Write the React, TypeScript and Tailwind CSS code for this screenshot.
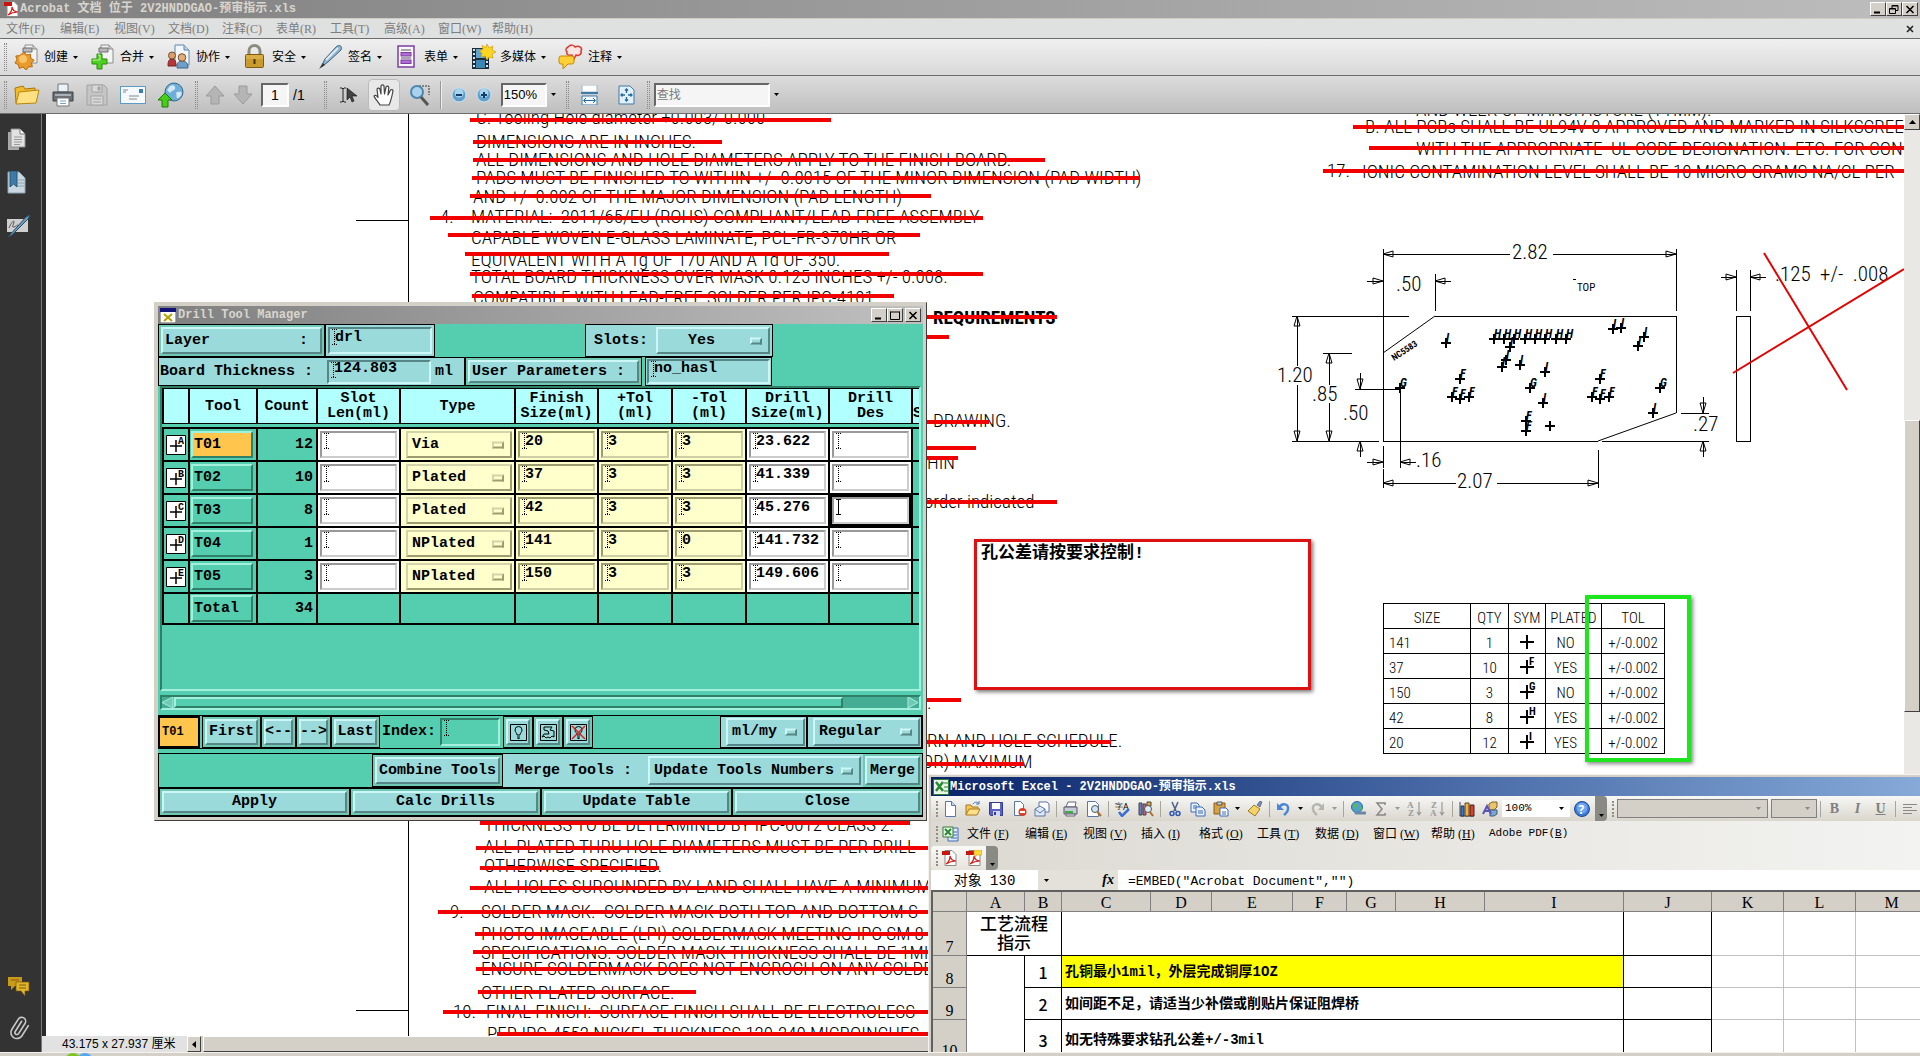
import React from 'react';
import { Paperclip } from 'lucide-react';

type Kids = { children?: React.ReactNode };

const MONO = "font-['Liberation_Mono','Noto_Sans_CJK_SC',monospace]";
const SERIF = "font-['Liberation_Serif','Noto_Sans_CJK_SC',serif]";
const SANS = "font-['Liberation_Sans','Noto_Sans_CJK_SC',sans-serif]";
const CAD = "font-['Roboto_Condensed','Open_Sans_Condensed','Liberation_Sans_Narrow','Liberation_Sans',sans-serif]";

/* ---------- small shared pieces ---------- */

function Ic({ w = 24, h = 24, box, children }: Kids & { w?: number; h?: number; box?: string }) {
  return (
    <svg width={w} height={h} viewBox={box ?? `0 0 ${w} ${h}`} className="shrink-0" aria-hidden="true">
      {children}
    </svg>
  );
}

function Caret({ className = 'fill-black' }: { className?: string }) {
  return (
    <svg width="5" height="3" viewBox="0 0 5 3" className={`shrink-0 ${className}`} aria-hidden="true">
      <path d="M0 0h5L2.5 3z" />
    </svg>
  );
}

function WinButton({ kind }: { kind: 'min' | 'max' | 'restore' | 'close' }) {
  return (
    <button
      aria-label={kind}
      className="flex h-[14px] w-4 items-center justify-center border border-b-[#404040] border-l-white border-r-[#404040] border-t-white bg-[#d4d0c8]"
    >
      <svg width="10" height="9" viewBox="0 0 10 9" fill="none" stroke="#000" aria-hidden="true">
        {kind === 'min' && <path d="M1 7.5h6" strokeWidth="2" />}
        {kind === 'max' && <path d="M.5 1h9M.5 .5v8h9v-8" />}
        {kind === 'restore' && <path d="M3 3V.5h6v5H7M3 1h6M.5 3.5h6v5h-6zM.5 4h6" />}
        {kind === 'close' && <path d="M1.500 1l7 7m0-7l-7 7" strokeWidth="1.600" />}
      </svg>
    </button>
  );
}

/* ---------- Acrobat icons ---------- */

const Sheet = ({ x = 8, y = 1 }: { x?: number; y?: number }) => (
  <g transform={`translate(${x} ${y})`}>
    <path d="M2 0h8l4 4v14H2z" fill="#f4f4f4" stroke="#8c8c8c" />
    <path d="M10 0v4h4" fill="#d0d0d0" stroke="#8c8c8c" />
    <path d="M0 3h9v4H0z" fill="#b9b9b9" stroke="#6f6f6f" />
  </g>
);

const CreateIcon = () => (
  <Ic w={26} h={26}>
    <Sheet x={9} />
    <path d="M10 8l2.500 3 4-.8.2 4 3.500 2-2.800 2.800 1 3.700-4 .2-2.200 3.200L9 23l-3.700 1.500-.9-3.800L1 19l2-3.400L1.800 12l3.900-.4z" fill="#e99a2b" stroke="#b8690d" />
    <circle cx="9" cy="15" r="4" fill="#f8c468" />
  </Ic>
);
const MergeIcon = () => (
  <Ic w={26} h={26}>
    <Sheet x={9} />
    <path d="M7 10h5v5h5v5h-5v5H7v-5H2v-5h5z" fill="#4fd01f" stroke="#2b8a0c" />
    <path d="M8 11h2v5H3v1" fill="none" stroke="#b5f59a" />
  </Ic>
);
const CollabIcon = () => (
  <Ic w={26} h={26}>
    <path d="M9 1h9l5 5v15H9z" fill="#f3f7fb" stroke="#5a88ad" />
    <path d="M18 1v5h5" fill="#b9d4e8" stroke="#5a88ad" />
    <path d="M2 22c0-5 1-7 4-7s4 2 4 7z" fill="#b8353a" stroke="#7d1e22" />
    <circle cx="6" cy="11.500" r="3.500" fill="#d9a06c" stroke="#7b4c25" />
    <path d="M11 24c0-5 1-7 5-7s6 2 6 7z" fill="#6f9fc7" stroke="#38658c" />
    <circle cx="16" cy="13.500" r="3.800" fill="#e0ad7e" stroke="#7b4c25" />
  </Ic>
);
const LockIcon = () => (
  <Ic w={26} h={26}>
    <path d="M7 11V7a5.500 5.500 0 0111 0v4" fill="none" stroke="#8b8b80" strokeWidth="3" />
    <rect x="3.500" y="10.500" width="18" height="13" rx="1" fill="#c99a2e" stroke="#7e5b0d" />
    <path d="M4 12h17M4 14h17" stroke="#e6c161" />
    <path d="M12.500 15v5" stroke="#4b3400" strokeWidth="2" />
  </Ic>
);
const PenIcon = () => (
  <Ic w={26} h={26}>
    <path d="M3 23l4-8L18 3c3-3 7-1 5 3L10 18z" fill="#8eb4cf" stroke="#43637c" />
    <path d="M8 16L20 4" stroke="#dcebf5" strokeWidth="2" />
    <path d="M1 25l4-6 2 2z" fill="#333" />
  </Ic>
);
const FormIcon = () => (
  <Ic w={26} h={26}>
    <rect x="4" y="2" width="16" height="21" fill="#fbf7ff" stroke="#7b3fa0" strokeWidth="1.500" />
    <path d="M7 6h10M7 14h10" stroke="#555" />
    <rect x="7" y="8.500" width="10" height="3.500" fill="#b26bd6" stroke="#7b3fa0" />
    <rect x="7" y="16" width="10" height="3.500" fill="#b26bd6" stroke="#7b3fa0" />
  </Ic>
);
const MediaIcon = () => (
  <Ic w={26} h={26}>
    <rect x="2" y="4" width="17" height="21" fill="#1d2d38" />
    <rect x="6" y="5" width="9" height="9" fill="#5fa6cf" />
    <rect x="6" y="16" width="9" height="8" fill="#3b86b4" />
    <path d="M4 5v20M17 5v20" stroke="#dfe7ec" strokeWidth="2" strokeDasharray="2 2" />
    <path d="M17 0l2 4 4-2-1 4 4 2-4 2 1 4-4-1-2 3-2-4-4 1 1-4-3-2 4-1.500-1-4 4 2z" fill="#ffd61f" stroke="#d79b00" strokeWidth=".7" />
  </Ic>
);
const NoteIcon = () => (
  <Ic w={26} h={26}>
    <path d="M10 3c3-3 6-2 7 0 4-2 8 1 6 4 1 4-3 5-5 4l-2 4-2-4c-4 1-6-1-5-3-2-1-1-4 1-5z" fill="#fbe5e3" stroke="#d93a2f" strokeWidth="1.500" />
    <path d="M3 12h11q2 0 2 2v4q0 2-2 2h-4l-5 5v-5H3q-2 0-2-2v-4q0-2 2-2z" fill="#ffcf36" stroke="#c78a06" />
  </Ic>
);

const FolderIcon = () => (
  <Ic w={26} h={22}>
    <path d="M2 19L1 4l8-2 2 3 10-1v3" fill="#f0b92e" stroke="#a8770d" />
    <path d="M2 20L5 8l20-2-3 13z" fill="#ffe184" stroke="#b8860b" />
  </Ic>
);
const PrinterIcon = () => (
  <Ic w={22} h={24}>
    <path d="M6 1h10v8H6z" fill="#eaf3fa" stroke="#777" />
    <path d="M1 9h20v9H1z" fill="#6b7075" stroke="#3c3f42" />
    <path d="M3 12h16" stroke="#a9b0b5" strokeWidth="2" />
    <path d="M5 15h12v8H5z" fill="#fff" stroke="#777" />
    <path d="M8 18h6M8 20.500h6" stroke="#7aa2c0" />
  </Ic>
);
const DiskIcon = () => (
  <Ic w={22} h={22}>
    <path d="M1 1h17l3 3v17H1z" fill="#c5c5c5" stroke="#a3a3a3" />
    <path d="M6 1h10v7H6zM5 12h12v9H5z" fill="#d8d8d8" stroke="#a3a3a3" />
    <path d="M12 3h2v3h-2zM7 15h8M7 18h8" stroke="#a3a3a3" fill="#aaa" />
  </Ic>
);
const MailIcon = () => (
  <Ic w={26} h={20}>
    <rect x=".5" y="1.500" width="25" height="17" fill="#f4f9fd" stroke="#5d9ac4" />
    <rect x="19" y="4" width="4" height="4" fill="#3a7fb4" />
    <path d="M3 5h5M3 7h3M9 11h10M9 14h8" stroke="#888" />
  </Ic>
);
const GlobeIcon = () => (
  <Ic w={26} h={26}>
    <circle cx="16" cy="10" r="9" fill="#6faed8" stroke="#33688f" />
    <path d="M12 4c4-2 6 1 5 3s-3 1-4 3-3-1-4-2zM18 11c3-2 5-1 6 0-1 4-4 6-5 5s0-3-1-5z" fill="#d4e9f7" />
    <path d="M7 11l7 7h-4v7H4v-7H0z" fill="#45cf1a" stroke="#22790a" />
  </Ic>
);
const ArrowIcon = ({ down = false }: { down?: boolean }) => (
  <Ic w={20} h={20}>
    <path d={down ? 'M6 1h8v8h5l-9 10L1 9h5z' : 'M10 1l9 10h-5v8H6v-8H1z'} fill="#b5b5b5" stroke="#9b9b9b" />
  </Ic>
);
const SelectIcon = () => (
  <Ic w={20} h={18}>
    <path d="M1 2h2l1 1 1-1h2M4 3v12M1 16h2l1-1 1 1h2" fill="none" stroke="#222" />
    <path d="M8 2v12l3-3 2 5 2-1-2-5h5z" fill="#444" stroke="#111" strokeWidth=".6" />
  </Ic>
);
const HandIcon = () => (
  <Ic w={24} h={24}>
    <path
      d="M8 22c-2-4-5-6-6-9 1-1.500 3-.5 4 1.500L5 6c1-1.500 2.500-1 3 .5l1 4.500V3c1-1.500 2.600-1.500 3 0l.500 8L14 4c1-1.300 2.600-1 2.800.5L16 12l2.500-5c1-1 2.500-.4 2.500 1-1 5-2 10-4 14z"
      fill="#fff"
      stroke="#444"
      strokeWidth="1.200"
      strokeLinejoin="round"
    />
  </Ic>
);
const MagnifyIcon = () => (
  <Ic w={22} h={22}>
    <path d="M10 2h10v9" fill="none" stroke="#333" strokeDasharray="2 1" />
    <circle cx="8" cy="8" r="6" fill="#a9d2ee" stroke="#4f86ad" strokeWidth="2" />
    <path d="M12 13l7 8" stroke="#555" strokeWidth="3" />
  </Ic>
);
const RoundIcon = ({ plus = false }: { plus?: boolean }) => (
  <Ic w={16} h={16}>
    <circle cx="8" cy="8" r="7" fill="#5f9fcb" stroke="#cfe3f1" />
    <circle cx="8" cy="6" r="4.500" fill="#a8d2ee" />
    <path d={plus ? 'M5 8h6M8 5v6' : 'M5 8h6'} stroke="#0f3f63" strokeWidth="2" />
  </Ic>
);
const FitWidthIcon = () => (
  <Ic w={17} h={20}>
    <path d="M1 0h15v7H1z" fill="#fff" stroke="#9cb9cf" />
    <path d="M0 8h17" stroke="#3e7ba7" strokeWidth="2" />
    <path d="M1 11h15v9H1z" fill="#f2f8fc" stroke="#3e7ba7" />
    <path d="M3 15.500h11M5 13l-2.500 2.500L5 18M12 13l2.500 2.500L12 18" fill="none" stroke="#236a9e" />
  </Ic>
);
const FitPageIcon = () => (
  <Ic w={17} h={20}>
    <path d="M1 1h11l4 4v14H1z" fill="#e3f0f8" stroke="#3e7ba7" />
    <path d="M8.500 4v4M8.500 12v4M3 10h4M10 10h4M7 5.500L8.500 4 10 5.500M7 14.500L8.500 16l1.500-1.500M4.500 8.500L3 10l1.500 1.500M12.500 8.500L14 10l-1.500 1.500" fill="none" stroke="#236a9e" strokeWidth="1.300" />
  </Ic>
);
const PdfIcon = ({ note = false, s = 16 }: { note?: boolean; s?: number }) => (
  <Ic w={s} h={s} box="0 0 16 16">
    <path d="M3 .5h7l4 4v11H3z" fill="#fff" stroke="#8a8a8a" />
    <path d="M0 1h8v4H0z" fill="#c8150d" />
    <path d="M4 14c3-2 4-5 4-8 1 4 3 5 6 5-4 0-7 1-10 3z" fill="none" stroke="#d8201a" strokeWidth="1.200" />
    {note && <path d="M8 0h8v5h-5l-2 2V5H8z" fill="#ffd93b" stroke="#c79a10" strokeWidth=".6" />}
  </Ic>
);

const Grip = () => <span className="h-7 w-[3px] shrink-0 border-x border-dotted border-[#8a8a8a]" />;

/* ---------- Acrobat chrome ---------- */

const acroMenus = ['文件(F)', '编辑(E)', '视图(V)', '文档(D)', '注释(C)', '表单(R)', '工具(T)', '高级(A)', '窗口(W)', '帮助(H)'];

const acroTasks = [
  { label: '创建', icon: <CreateIcon /> },
  { label: '合并', icon: <MergeIcon /> },
  { label: '协作', icon: <CollabIcon /> },
  { label: '安全', icon: <LockIcon /> },
  { label: '签名', icon: <PenIcon /> },
  { label: '表单', icon: <FormIcon /> },
  { label: '多媒体', icon: <MediaIcon /> },
  { label: '注释', icon: <NoteIcon /> },
];

const BOX_IN = 'border-2 border-b-white border-l-[#666] border-r-white border-t-[#666] bg-[#f5f5f5]';

function AcrobatHeader() {
  return (
    <header className="shrink-0">
      <div className="flex h-[18px] items-center bg-linear-to-r from-[#808080] to-[#bdbdbd] pl-1 pr-[2px]">
        <PdfIcon />
        <h1 className={`flex-1 whitespace-pre text-xs font-bold leading-[18px] text-[#d8d5ce] ${MONO}`}>
          Acrobat 文档 位于 2V2HNDDGAO-预审指示.xls
        </h1>
        <div className="flex">
          <WinButton kind="min" />
          <WinButton kind="restore" />
          <WinButton kind="close" />
        </div>
      </div>
      <nav className={`flex h-5 items-center border-t border-[#cfccc4] bg-[#dfe0e0] pl-[6px] text-xs text-[#7d7d7d] ${SERIF}`}>
        {acroMenus.map((m) => (
          <button key={m} className="w-[54px] text-left">
            {m}
          </button>
        ))}
        <button aria-label="close document" className="ml-auto mr-[6px] text-[#222]">
          <svg width="8" height="8" viewBox="0 0 8 8" stroke="currentColor" strokeWidth="1.600" aria-hidden="true">
            <path d="M1 1l6 6m0-6L1 7" />
          </svg>
        </button>
      </nav>
      <div className={`flex h-[37px] items-center border-t border-[#6c6c6c] bg-linear-to-b from-[#f0f0f0] to-[#d9d9d9] pl-1 text-xs text-black ${SANS}`}>
        <Grip />
        <div className="flex gap-3 pl-[7px]">
          {acroTasks.map((t) => (
            <button key={t.label} className="flex items-center gap-1">
              {t.icon}
              <span className="whitespace-nowrap pr-px">{t.label}</span>
              <Caret />
            </button>
          ))}
        </div>
      </div>
      <div className={`flex h-[39px] items-center border-y border-[#6c6c6c] bg-linear-to-b from-[#dcdcdc] to-[#bfbfbf] pl-1 text-sm text-black ${SANS}`}>
        <Grip />
        <div className="flex items-center gap-3 px-[7px]">
          <button aria-label="open"><FolderIcon /></button>
          <button aria-label="print"><PrinterIcon /></button>
          <button aria-label="save"><DiskIcon /></button>
          <button aria-label="mail"><MailIcon /></button>
          <button aria-label="web"><GlobeIcon /></button>
        </div>
        <span className="w-1" />
        <Grip />
        <div className="flex items-center gap-2 px-[7px]">
          <button aria-label="previous page"><ArrowIcon /></button>
          <button aria-label="next page"><ArrowIcon down /></button>
          <span className="flex items-center gap-1">
            <input aria-label="page number" defaultValue="1" className={`h-6 w-7 text-center ${BOX_IN}`} />
            /1
          </span>
        </div>
        <span className="w-3" />
        <Grip />
        <div className="flex items-center gap-[9px] pl-3">
          <button aria-label="select"><SelectIcon /></button>
          <button aria-label="hand" className="flex h-8 w-8 items-center justify-center rounded border border-[#bbb] bg-[#e8e8e8]">
            <HandIcon />
          </button>
          <button aria-label="marquee zoom"><MagnifyIcon /></button>
          <span className="h-7 w-[2px] border-l border-[#999] bg-[#eee]" />
          <button aria-label="zoom out"><RoundIcon /></button>
          <button aria-label="zoom in"><RoundIcon plus /></button>
          <span className="flex items-center gap-1">
            <input aria-label="zoom level" defaultValue="150%" className={`h-6 w-[46px] pl-px text-[13px] ${BOX_IN}`} />
            <Caret />
          </span>
        </div>
        <div className="flex items-center pl-[10px]">
          <Grip />
          <button aria-label="fit width" className="ml-3"><FitWidthIcon /></button>
          <button aria-label="fit page" className="ml-5 mr-3"><FitPageIcon /></button>
          <Grip />
          <input
            aria-label="find"
            placeholder="查找"
            className={`ml-1 mr-1 h-6 w-[116px] pl-px text-xs placeholder:text-[#7a7a7a] ${BOX_IN}`}
          />
          <Caret />
        </div>
      </div>
    </header>
  );
}

function SideRail() {
  return (
    <aside className="flex w-[42px] shrink-0 flex-col items-center border-r border-[#7a7a7a] bg-[#333] pb-3 pr-1 pt-[14px]">
      <div className="flex flex-col gap-5">
        <button aria-label="pages">
          <Ic w={20} h={23}>
            <path d="M1 4h11v18H1z" fill="#a9a9a9" />
            <path d="M4 1h9l5 5v13H4z" fill="#e2e2e2" stroke="#8f8f8f" />
            <path d="M13 1v5h5" fill="#fff" stroke="#777" />
            <path d="M7 9h8M7 11.500h8M7 14h8M7 16.500h6" stroke="#999" />
          </Ic>
        </button>
        <button aria-label="bookmarks">
          <Ic w={20} h={23}>
            <path d="M1 1h11l6 6v15H1z" fill="#c9d7e0" stroke="#8da3b1" />
            <path d="M11 9h6M11 12h6M11 15h6" stroke="#8da3b1" />
            <path d="M3 0h7v16l-3.500-3L3 16z" fill="#3e7ca6" stroke="#245674" />
          </Ic>
        </button>
        <button aria-label="signatures">
          <Ic w={24} h={24}>
            <path d="M0 5h21v13H0z" fill="#cfcfcf" />
            <path d="M2 14c3-7 5-8 5-6s-3 6 0 5 3-3 5-1" fill="none" stroke="#555" />
            <path d="M1 23L19 3l4-2-2 4L5 21z" fill="#6e9ab8" stroke="#2d5069" />
          </Ic>
        </button>
      </div>
      <div className="mt-auto flex flex-col gap-5">
        <button aria-label="comments">
          <Ic w={24} h={20}>
            <path d="M1 1h14v9H8l-4 4v-4H1z" fill="#c99a17" />
            <path d="M9 6h13v9h-4v5l-4-5H9z" fill="#e0b52c" stroke="#6e540c" strokeWidth=".7" />
            <path d="M12 9h7M12 12h7M4 4h8" stroke="#7d6010" />
          </Ic>
        </button>
        <button aria-label="attachments">
          <Paperclip size={24} strokeWidth={1.600} className="-rotate-12 text-[#c9c9c9]" />
        </button>
      </div>
    </aside>
  );
}

/* ---------- CAD sheet ---------- */

// Sheet items are stored in screen units; the pane itself starts here.
const ORIGIN_X = 46;
const ORIGIN_Y = 114;

type Note = { x: number; y: number; t: string; bold?: boolean };

const notes: Note[] = [
  { x: 476, y: 118, t: 'C. Tooling Hole diameter +0.003/-0.000' },
  { x: 476, y: 142, t: 'DIMENSIONS ARE IN INCHES.' },
  { x: 476, y: 160, t: 'ALL DIMENSIONS AND HOLE DIAMETERS APPLY TO THE FINISH BOARD.' },
  { x: 476, y: 178, t: 'PADS MUST BE FINISHED TO WITHIN +/- 0.0015 OF THE MINOR DIMENSION (PAD WIDTH)' },
  { x: 473, y: 197, t: 'AND +/- 0.002 OF THE MAJOR DIMENSION (PAD LENGTH)' },
  { x: 440, y: 217, t: '4.' },
  { x: 471, y: 217, t: 'MATERIAL:  2011/65/EU (ROHS) COMPLIANT/LEAD-FREE ASSEMBLY' },
  { x: 471, y: 238, t: 'CAPABLE WOVEN E-GLASS LAMINATE, PCL-FR-370HR OR' },
  { x: 471, y: 260, t: 'EQUIVALENT WITH A Tg OF 170 AND A Td OF 350.' },
  { x: 471, y: 277, t: 'TOTAL BOARD THICKNESS OVER MASK 0.125 INCHES +/- 0.008.' },
  { x: 473, y: 298, t: 'COMPATIBLE WITH LEAD-FREE SOLDER PER IPC-4101.' },
  { x: 933, y: 318, t: 'REQUIREMENTS', bold: true },
  { x: 933, y: 421, t: 'DRAWING.' },
  { x: 927, y: 463, t: 'HIN' },
  { x: 924, y: 502, t: 'order indicated' },
  { x: 927, y: 703, t: '.' },
  { x: 927, y: 741, t: 'RN AND HOLE SCHEDULE.' },
  { x: 922, y: 762, t: 'OR) MAXIMUM' },
  { x: 484, y: 825, t: 'THICKNESS TO BE DETERMINED BY IPC-6012 CLASS 2.' },
  { x: 484, y: 847, t: 'ALL PLATED THRU HOLE DIAMETERS MUST BE PER DRILL' },
  { x: 484, y: 866, t: 'OTHERWISE SPECIFIED.' },
  { x: 484, y: 887, t: 'ALL HOLES SUROUNDED BY LAND SHALL HAVE A MINIMUM' },
  { x: 450, y: 912, t: '9.' },
  { x: 481, y: 912, t: 'SOLDER MASK.  SOLDER MASK BOTH TOP AND BOTTOM S' },
  { x: 481, y: 934, t: 'PHOTO IMAGEABLE (LPI) SOLDERMASK MEETING IPC SM 8' },
  { x: 481, y: 953, t: 'SPECIFICATIONS. SOLDER MASK THICKNESS SHALL BE 1MIL' },
  { x: 481, y: 969, t: 'ENSURE SOLDERMASK DOES NOT ENCROCH ON ANY SOLDE' },
  { x: 481, y: 993, t: 'OTHER PLATED SURFACE.' },
  { x: 453, y: 1012, t: '10.' },
  { x: 486, y: 1012, t: 'FINAL FINISH:  SURFACE FINISH SHALL BE ELECTROLESS' },
  { x: 487, y: 1034, t: 'PER IPC-4552 NICKEL THICKNESS 120-240 MICROINCHES' },
  { x: 1416, y: 110, t: 'AND WEEK OF MANUFACTURE (YYMM).' },
  { x: 1365, y: 127, t: 'B. ALL PCBs SHALL BE UL94V-0 APPROVED AND MARKED IN SILKSCREEN' },
  { x: 1416, y: 149, t: 'WITH THE APPROPRIATE  UL CODE DESIGNATION. ETC. FOR CONFIG' },
  { x: 1327, y: 171, t: '17.' },
  { x: 1362, y: 172, t: 'IONIC CONTAMINATION LEVEL SHALL BE 10 MICRO GRAMS NA/CL PER' },
];

// [x1, x2, y]
const strikes: [number, number, number][] = [
  [470, 831, 120],
  [473, 722, 142],
  [473, 1045, 160],
  [472, 1140, 178],
  [470, 931, 196],
  [430, 983, 218],
  [448, 920, 235],
  [465, 889, 254],
  [470, 983, 274],
  [472, 894, 296],
  [900, 1057, 317],
  [900, 949, 337],
  [900, 989, 422],
  [900, 976, 448],
  [900, 958, 458],
  [900, 1057, 502],
  [900, 961, 700],
  [900, 1111, 742],
  [900, 1024, 764],
  [480, 910, 823],
  [476, 930, 848],
  [480, 659, 868],
  [470, 930, 888],
  [438, 930, 912],
  [475, 930, 934],
  [473, 930, 952],
  [476, 930, 969],
  [478, 696, 992],
  [443, 930, 1012],
  [497, 930, 1034],
  [1353, 1904, 127],
  [1369, 1904, 148],
  [1323, 1904, 171],
];

const dims = [
  [1512, 259, '2.82'],
  [1396, 291, '.50'],
  [1277, 382, '1.20'],
  [1312, 401, '.85'],
  [1343, 420, '.50'],
  [1416, 467, '.16'],
  [1457, 488, '2.07'],
  [1693, 431, '.27'],
  [1775, 281, '.125  +/-  .008'],
] as const;

const holes: [number, number, string][] = [
  [1446, 343, 'I'],
  [1494, 339, 'H'], [1504, 339, 'H'], [1514, 339, 'H'], [1525, 339, 'H'],
  [1535, 339, 'H'], [1545, 339, 'H'], [1556, 339, 'H'], [1566, 339, 'H'],
  [1613, 329, 'I'], [1621, 328, 'I'], [1644, 337, 'I'], [1638, 346, 'I'],
  [1510, 347, 'I'], [1506, 360, 'I'], [1502, 367, 'I'], [1520, 365, 'I'],
  [1545, 372, 'I'], [1543, 403, 'I'], [1653, 413, 'I'],
  [1460, 379, 'F'], [1452, 397, 'F'], [1460, 399, 'F'], [1469, 397, 'F'],
  [1600, 379, 'F'], [1592, 397, 'F'], [1600, 399, 'F'], [1609, 397, 'F'],
  [1526, 421, 'F'], [1526, 431, 'F'],
  [1400, 388, 'G'], [1530, 388, 'G'], [1660, 388, 'G'],
  [1550, 426, ''],
];

// [tip x, tip y, angle]: 0 points right
const arrows = [
  [1383, 254, 180], [1676, 254, 0], [1383, 281, 0], [1435, 281, 180],
  [1297, 316, 270], [1297, 441, 90], [1329, 353, 270], [1329, 441, 90],
  [1360, 389, 90], [1360, 441, 270], [1383, 462, 0], [1400, 462, 180],
  [1383, 483, 180], [1598, 483, 0], [1703, 413, 90], [1703, 441, 270],
  [1736, 277, 0], [1750, 277, 180],
];

function BoardDrawing() {
  return (
    <svg
      width="644"
      height="270"
      viewBox="1260 230 644 270"
      className={`absolute left-[1214px] top-[116px] ${CAD}`}
      fill="none"
      stroke="#000"
      role="img"
      aria-label="board outline"
    >
      <g shapeRendering="crispEdges">
        <path d="M1383 249V441H1598M1435 316H1676V413M1676 249V311M1435 274V311" />
        <path d="M1383 254H1510M1553 254H1676M1367 281H1383M1435 281H1451" />
        <path d="M1292 316H1409M1292 441H1379M1297 316V366M1297 385V441" />
        <path d="M1323 353H1352M1329 353V385M1329 403V441M1355 389H1400V468M1360 373V389M1360 441V457" />
        <path d="M1383 446V468M1383 469V488M1367 462H1383M1400 462H1416M1383 483H1456M1497 483H1598V450M1598 483V488" />
        <path d="M1681 413H1709M1602 441H1709M1703 397V413M1703 441V457" />
        <path d="M1736 316H1750V441H1736zM1736 270V311M1750 270V311M1721 277H1736M1750 277H1766M1573 279H1576" />
      </g>
      <path d="M1383 353L1435 316M1598 441L1676 413" />
      {arrows.map(([x, y, a], i) => (
        <path key={i} d="M0 0L-10 -3V3z" transform={`translate(${x} ${y}) rotate(${a})`} />
      ))}
      {holes.map(([x, y, c], i) => (
        <g key={i}>
          <path d={`M${x - 5} ${y}h10M${x} ${y - 5}v10`} strokeWidth="2" />
          <text x={x} y={y - 1} fontSize="12" fontWeight="bold" fontStyle="italic" fill="#000" stroke="none">
            {c}
          </text>
        </g>
      ))}
      <g fill="#000" stroke="none" fontSize="21" fontWeight="300">
        {dims.map(([x, y, t]) => (
          <text key={`${x}-${y}`} x={x} y={y} className="whitespace-pre">
            {t}
          </text>
        ))}
        <text x="1577" y="291" fontSize="11" fontWeight="400">TOP</text>
        <text x="0" y="0" fontSize="9" fontWeight="bold" transform="translate(1394 361) rotate(-33)">NC5583</text>
      </g>
      <path d="M1764 253L1847 390M1733 373L1904 269" stroke="#e60000" strokeWidth="2" />
    </svg>
  );
}

const holeRows = [
  ['141', '1', '', 'NO'],
  ['37', '10', 'F', 'YES'],
  ['150', '3', 'G', 'NO'],
  ['42', '8', 'H', 'YES'],
  ['20', '12', 'I', 'YES'],
];

function HoleSchedule() {
  const cell = 'border border-black px-0 pb-0 pt-1';
  return (
    <div className="absolute left-[1337px] top-[489px]">
      <table className={`w-[282px] table-fixed border-collapse text-center text-[15px] font-light leading-[20px] text-black ${CAD}`}>
        <colgroup>
          <col className="w-[87px]" />
          <col className="w-[38px]" />
          <col className="w-[37px]" />
          <col className="w-[56px]" />
          <col className="w-[63px]" />
        </colgroup>
        <thead>
          <tr className="h-[25px]">
            {['SIZE', 'QTY', 'SYM', 'PLATED', 'TOL'].map((h) => (
              <th key={h} className={`whitespace-nowrap font-light ${cell}`}>
                {h}
              </th>
            ))}
          </tr>
        </thead>
        <tbody>
          {holeRows.map(([size, qty, sym, plated]) => (
            <tr key={size} className="h-[25px]">
              <td className="border border-black pb-0 pl-[5px] pr-0 pt-1 text-left">{size}</td>
              <td className={cell}>{qty}</td>
              <td className="border border-black p-0">
                <svg width="18" height="20" viewBox="0 0 18 20" className="mx-auto block" aria-hidden="true">
                  <path d="M2 11h14M9 4v14" stroke="#000" strokeWidth="2" />
                  <text x="11" y="9" fontSize="11" fontWeight="bold">{sym}</text>
                </svg>
              </td>
              <td className="border border-black pb-0 pl-0 pr-4 pt-1">{plated}</td>
              <td className={cell}>+/-0.002</td>
            </tr>
          ))}
        </tbody>
      </table>
      <div className="absolute -top-2 left-[202px] h-[167px] w-[106px] border-4 border-[#1ee61e] shadow-[2px_2px_4px_#888]" />
    </div>
  );
}

function CadSheet() {
  return (
    <main className="relative min-w-0 flex-1 overflow-hidden bg-white">
      <div className="absolute inset-y-0 left-[362px] w-px bg-black" />
      <div className="absolute left-[310px] top-[106px] h-px w-[52px] bg-black" />
      <div className="absolute left-[310px] top-[896px] h-px w-[52px] bg-black" />
      {notes.map((n) => (
        <p
          key={`${n.x}-${n.y}`}
          className={`absolute whitespace-pre text-[19px] leading-[18px] text-black ${CAD} ${n.bold ? 'font-bold' : 'font-light'}`}
          style={{ left: n.x - ORIGIN_X, top: n.y - ORIGIN_Y - 9 }}
        >
          {n.t}
        </p>
      ))}
      {strikes.map(([x1, x2, y]) => (
        <div
          key={`${x1}-${y}`}
          className="absolute h-1 bg-[#f20000]"
          style={{ left: x1 - ORIGIN_X, top: y - ORIGIN_Y - 2, width: x2 - x1 }}
        />
      ))}
      <BoardDrawing />
      <HoleSchedule />
      <div className={`absolute left-[928px] top-[425px] h-[151px] w-[337px] border-[3px] border-[#dd1111] bg-white pl-1 text-[17px] font-bold leading-[24px] text-black shadow-[2px_2px_4px_#777] ${MONO}`}>
        孔公差请按要求控制!
      </div>
    </main>
  );
}

/* ---------- Drill Tool Manager ---------- */

const TEAL_UP = 'border-2 border-t-[#a3f0dc] border-l-[#a3f0dc] border-b-[#2f8069] border-r-[#2f8069]';
const TEAL_IN = 'border-2 border-t-[#2f8069] border-l-[#2f8069] border-b-[#a3f0dc] border-r-[#a3f0dc]';
const BLUE_UP = 'border-2 border-t-[#cdf6f6] border-l-[#cdf6f6] border-b-[#568686] border-r-[#568686]';
const BLUE_IN = 'border-2 border-t-[#568686] border-l-[#568686] border-b-[#cdf6f6] border-r-[#cdf6f6]';
const CREAM_UP = 'border-2 border-t-[#d3d3ac] border-l-[#d3d3ac] border-b-[#9c9c70] border-r-[#9c9c70]';
const CREAM_IN = 'border-2 border-t-[#9c9c70] border-l-[#9c9c70] border-b-[#cfcfa5] border-r-[#cfcfa5]';
const WHITE_IN = 'border-2 border-t-[#999] border-l-[#999] border-b-[#ccc] border-r-[#ccc]';

function Beam({ solid = false }: { solid?: boolean }) {
  return (
    <svg width="5" height="16" viewBox="0 0 5 16" className="pointer-events-none absolute left-1 top-[2px]" aria-hidden="true">
      <path d="M0 .5h5M0 15.500h5M2.500 0v16" fill="none" stroke="#000" strokeDasharray={solid ? undefined : '1 1'} />
    </svg>
  );
}

function Field({ value = '', label, tone, solid, id }: { value?: string; label: string; tone: string; solid?: boolean; id?: string }) {
  return (
    <span className="relative block h-full w-full">
      <input id={id} aria-label={label} defaultValue={value} className={`block h-full w-full pb-[6px] pl-[5px] ${tone}`} />
      <Beam solid={solid} />
    </span>
  );
}

function Option({ options, label, tone, id, mark, pad = 'pl-1' }: { options: string[]; label: string; tone: string; id?: string; mark: string; pad?: string }) {
  return (
    <span className="relative block h-full w-full">
      <select id={id} aria-label={label} className={`h-full w-full appearance-none ${pad} ${tone}`}>
        {options.map((o) => (
          <option key={o}>{o}</option>
        ))}
      </select>
      <span className={`pointer-events-none absolute right-2 top-1/2 h-[7px] w-3 -translate-y-1/2 ${mark}`} />
    </span>
  );
}

function PushCell({ children, className = '', label }: Kids & { className?: string; label?: string }) {
  return (
    <div className={`border border-black bg-[#6fc9b4] p-[2px] ${className}`}>
      <button aria-label={label} className={`flex h-full w-full items-center justify-center whitespace-pre bg-[#9adada] ${BLUE_UP}`}>
        {children}
      </button>
    </div>
  );
}

const drillCols = ['w-[26px]', 'w-[68px]', 'w-[60px]', 'w-[83px]', 'w-[115px]', 'w-[83px]', 'w-[74px]', 'w-[74px]', 'w-[83px]', 'w-[83px]', 'w-2'];

const drillHeads = ['', 'Tool', 'Count', 'Slot\nLen(ml)', 'Type', 'Finish\nSize(ml)', '+Tol\n(ml)', '-Tol\n(ml)', 'Drill\nSize(ml)', 'Drill\nDes', '\nS'];

const tools = [
  { id: 'T01', sym: 'A', count: 12, type: 'Via', finish: '20', plus: '3', minus: '3', drill: '23.622' },
  { id: 'T02', sym: 'B', count: 10, type: 'Plated', finish: '37', plus: '3', minus: '3', drill: '41.339' },
  { id: 'T03', sym: 'C', count: 8, type: 'Plated', finish: '42', plus: '3', minus: '3', drill: '45.276' },
  { id: 'T04', sym: 'D', count: 1, type: 'NPlated', finish: '141', plus: '3', minus: '0', drill: '141.732' },
  { id: 'T05', sym: 'E', count: 3, type: 'NPlated', finish: '150', plus: '3', minus: '3', drill: '149.606' },
];

function DrillTable() {
  const cell = 'border-l-2 border-t-2 border-black p-0';
  const cream = 'bg-[#ffffcc]';
  return (
    <table className="w-[757px] table-fixed border-separate border-spacing-0">
      <colgroup>
        {drillCols.map((w, i) => (
          <col key={i} className={w} />
        ))}
      </colgroup>
      <thead>
        <tr className="h-9">
          {drillHeads.map((h, i) => (
            <th key={i} className="overflow-hidden whitespace-pre border-b border-l-2 border-t border-black bg-[#b2ffff] p-0 font-bold leading-[15px]">
              {h}
            </th>
          ))}
        </tr>
        <tr className="h-[3px]">
          <td colSpan={11} className="p-0" />
        </tr>
      </thead>
      <tbody>
        {tools.map((t, row) => (
          <tr key={t.id} className="h-[33px]">
            <td className={cell}>
              <svg width="20" height="20" viewBox="0 0 20 20" className="mx-auto" aria-hidden="true">
                <path d="M.5.5h19v19H.5z" fill="#fff" stroke="#000" />
                <path d="M4 11h12M10 5v12" stroke="#000" strokeWidth="1.500" />
                <text x="12" y="9" fontSize="10">{t.sym}</text>
              </svg>
            </td>
            <td className={`${cell} h-[33px]`}>
              <button className={`ml-px block h-[27px] w-[62px] pl-px text-left ${TEAL_UP} ${row === 0 ? 'bg-[#ffc54d]' : ''}`}>{t.id}</button>
            </td>
            <td className={`${cell} pr-[3px] text-right`}>{t.count}</td>
            <td className={`${cell} bg-white`}>
              <div className="mx-[2px] h-[27px]"><Field label={`${t.id} slot length`} tone={`bg-white ${WHITE_IN}`} /></div>
            </td>
            <td className={`${cell} ${cream}`}>
              <div className="ml-[5px] mr-[2px] h-[27px]">
                <Option label={`${t.id} type`} options={[t.type, 'Via', 'Plated', 'NPlated'].filter((o, i, a) => a.indexOf(o) === i)} tone={`bg-[#ffffcc] ${CREAM_UP}`} mark={CREAM_UP} />
              </div>
            </td>
            {[t.finish, t.plus, t.minus].map((v, i) => (
              <td key={i} className={`${cell} ${cream}`}>
                <div className="mx-[2px] h-[27px]"><Field label={`${t.id} value ${i + 1}`} value={v} tone={`bg-[#ffffcc] ${CREAM_IN}`} /></div>
              </td>
            ))}
            <td className={`${cell} bg-white`}>
              <div className="mx-[2px] h-[27px]"><Field label={`${t.id} drill size`} value={t.drill} tone={`bg-white ${WHITE_IN}`} /></div>
            </td>
            <td className={`${cell} bg-white`}>
              <div className={`mx-[2px] h-[27px] ${row === 2 ? 'relative outline-[3px] outline-black' : ''}`}>
                <Field label={`${t.id} drill designator`} tone={`bg-white ${WHITE_IN}`} solid={row === 2} />
              </div>
            </td>
            <td className={cell} />
          </tr>
        ))}
        <tr className="h-[33px]">
          <td className={`${cell} border-b-2`} />
          <td className={`${cell} border-b-2`}>
            <button className={`ml-px block h-[27px] w-[62px] pl-px text-left ${TEAL_UP}`}>Total</button>
          </td>
          <td className={`${cell} border-b-2 pr-[3px] text-right`}>34</td>
          {[0, 1, 2, 3, 4, 5, 6, 7].map((i) => (
            <td key={i} className={`${cell} border-b-2`} />
          ))}
        </tr>
      </tbody>
    </table>
  );
}

function DrillToolManager() {
  return (
    <section className={`absolute left-[154px] top-[302px] flex h-[519px] w-[773px] flex-col border border-b-[#404040] border-l-[#d4d0c8] border-r-[#404040] border-t-[#d4d0c8] bg-[#d4d0c8] p-[3px] text-[15px] font-bold leading-[18px] text-black ${MONO}`}>
      <div className="flex h-[18px] shrink-0 items-center bg-linear-to-r from-[#808080] to-[#c0c0c0] pl-[2px] pr-[2px]">
        <Ic w={16} h={15}>
          <path d="M0 0h16v15H0z" fill="#fff" stroke="#555" />
          <path d="M0 0h16v4H0z" fill="#12127a" />
          <path d="M4 6l8 7m0-7l-8 7" stroke="#b5a400" strokeWidth="2" />
        </Ic>
        <h2 className="flex-1 pl-[2px] text-xs text-[#d8d5ce]">Drill Tool Manager</h2>
        <WinButton kind="min" />
        <WinButton kind="max" />
        <span className="w-[2px]" />
        <WinButton kind="close" />
      </div>

      <div className="flex min-h-0 flex-1 flex-col bg-[#55ceb0]">
        <div className="flex h-[33px] shrink-0">
          <div className="w-[167px] border border-black bg-[#6fc9b4] p-[2px]">
            <button className={`flex h-full w-full items-center justify-between bg-[#9adada] pl-[2px] pr-3 ${BLUE_UP}`}>
              <span>Layer</span>
              <span>:</span>
            </button>
          </div>
          <div className="w-[110px] border border-black bg-[#9adada] p-[2px]">
            <Field label="Layer" value="drl" tone={`bg-[#9adada] ${BLUE_IN}`} />
          </div>
          <div className="ml-[150px] flex w-[188px] items-center border border-black bg-[#9adada] p-[2px]">
            <label htmlFor="slots" className="pl-[6px] pr-2">Slots:</label>
            <div className="h-full flex-1">
              <Option id="slots" label="Slots" options={['Yes', 'No']} pad="pl-[30px]" tone={`bg-[#9adada] ${BLUE_UP}`} mark={BLUE_UP} />
            </div>
          </div>
        </div>

        <div className="flex h-[29px] shrink-0">
          <div className="flex w-[307px] items-center border border-black bg-[#9adada] pl-px">
            <label htmlFor="thickness" className="w-[167px] whitespace-pre">Board Thickness :</label>
            <div className="h-6 w-[104px]">
              <Field id="thickness" label="Board Thickness" value="124.803" tone={`bg-[#9adada] ${BLUE_IN}`} />
            </div>
            <span className="pl-1">ml</span>
          </div>
          <div className="w-[177px] border border-black bg-[#6fc9b4] p-[2px]">
            <button className={`h-full w-full whitespace-pre bg-[#9adada] pl-[2px] text-left ${BLUE_UP}`}>User Parameters :</button>
          </div>
          <div className="ml-[3px] w-[127px] border border-black bg-[#9adada] p-px">
            <Field label="User Parameters" value="no_hasl" tone={`bg-[#9adada] ${BLUE_IN}`} />
          </div>
        </div>

        <div className={`mx-[2px] mb-1 min-h-0 flex-1 overflow-hidden ${TEAL_IN}`}>
          <DrillTable />
        </div>

        <div className={`mx-[2px] mb-[5px] flex h-[15px] shrink-0 items-stretch bg-[#45ad94] ${TEAL_IN}`}>
          <button aria-label="scroll left" className="w-3">
            <svg width="12" height="11" viewBox="0 0 12 11" aria-hidden="true"><path d="M11 0v11L0 5.500z" fill="#6fc9b4" stroke="#a3f0dc" /></svg>
          </button>
          <div className={`w-[669px] bg-[#55ceb0] ${TEAL_UP}`} />
          <button aria-label="scroll right" className="ml-auto w-3">
            <svg width="12" height="11" viewBox="0 0 12 11" aria-hidden="true"><path d="M1 0v11L11 5.500z" fill="#6fc9b4" stroke="#a3f0dc" /></svg>
          </button>
        </div>

        <div className="flex h-[34px] shrink-0 border-b border-t border-black">
          <div className="flex w-[42px] items-center border-2 border-black bg-[#ffc54d] pl-[2px] text-xs">T01</div>
          <PushCell className="ml-[2px] w-[59px]">First</PushCell>
          <PushCell className="w-[35px]">&lt;--</PushCell>
          <PushCell className="w-[35px]">--&gt;</PushCell>
          <PushCell className="w-[49px]">Last</PushCell>
          <label htmlFor="idx" className="self-center pl-[2px] pr-1">Index:</label>
          <div className="w-[60px] py-[2px]">
            <Field id="idx" label="Index" tone={TEAL_IN} />
          </div>
          <PushCell className="ml-[3px] w-[30px]" label="highlight">
            <svg width="17" height="17" viewBox="0 0 17 17" fill="none" stroke="#000" aria-hidden="true">
              <path d="M.5.5h16v16H.5zM7 11c0-2-2-3-2-5a3.500 3.500 0 017 0c0 2-2 3-2 5zM7 13h3M7.500 14.500h2" />
            </svg>
          </PushCell>
          <PushCell className="w-[30px]" label="profile">
            <svg width="17" height="17" viewBox="0 0 17 17" fill="none" stroke="#000" aria-hidden="true">
              <path d="M.5.5h16v16H.5zM4 3h8l-2 3 4 1v6l-2-1-2 2-2-1-2 1-2-2-2 1 2-3h5l-1-3-4-1z" />
            </svg>
          </PushCell>
          <PushCell className="w-[30px]" label="clear highlight">
            <svg width="17" height="17" viewBox="0 0 17 17" fill="none" stroke="#000" aria-hidden="true">
              <path d="M.5.5h16v16H.5zM7 11c0-2-2-3-2-5a3.500 3.500 0 017 0c0 2-2 3-2 5zM7 13h3M7.500 14.500h2" />
              <path d="M2 2l13 13M15 2L2 15" stroke="#d22" strokeWidth="1.500" />
            </svg>
          </PushCell>
          <div className="ml-auto w-[87px] border border-black bg-[#9adada] py-px pl-[5px] pr-px">
            <Option label="Units" options={['ml/my', 'inch/mm']} tone={`bg-[#9adada] ${BLUE_UP}`} mark={BLUE_UP} />
          </div>
          <div className="w-[116px] border border-r-2 border-black bg-[#9adada] py-px pl-[5px] pr-px">
            <Option label="Mode" options={['Regular', 'Flat']} tone={`bg-[#9adada] ${BLUE_UP}`} mark={BLUE_UP} />
          </div>
        </div>

        <div className="mt-1 flex h-[35px] shrink-0 border border-black">
          <PushCell className="ml-[213px] w-[131px]">Combine Tools</PushCell>
          <div className="flex flex-1 items-center bg-[#9adada] p-[2px]">
            <label htmlFor="merge-mode" className="whitespace-pre pl-[10px] pr-4">Merge Tools :</label>
            <div className="h-full flex-1">
              <Option id="merge-mode" label="Merge Tools" options={['Update Tools Numbers', 'Keep Tools Numbers']} tone={`bg-[#9adada] ${BLUE_UP}`} mark={BLUE_UP} />
            </div>
          </div>
          <div className="w-[59px] bg-[#6fc9b4] p-[2px]">
            <button className={`h-full w-full bg-[#9adada] ${BLUE_UP}`}>Merge</button>
          </div>
        </div>

        <div className="grid h-[29px] shrink-0 grid-cols-4 border-b border-l border-black">
          <PushCell>Apply</PushCell>
          <PushCell>Calc Drills</PushCell>
          <PushCell>Update Table</PushCell>
          <PushCell>Close</PushCell>
        </div>
      </div>
    </section>
  );
}

/* ---------- Excel ---------- */

const Sep = () => <span className="ml-[3px] mr-[2px] h-4 w-px shrink-0 bg-[#a6a69c]" />;
const Dots = () => <span className="h-4 w-[2px] shrink-0 border-l-2 border-dotted border-[#8f8f86]" />;

function Tool({ label, children }: Kids & { label: string }) {
  return (
    <button aria-label={label} className="flex w-[23px] shrink-0 items-center justify-center">
      <svg width="16" height="16" viewBox="0 0 16 16" fill="none" aria-hidden="true">
        {children}
      </svg>
    </button>
  );
}

function Drop({ dim = false }: { dim?: boolean }) {
  return (
    <span className="flex w-[11px] shrink-0 justify-center">
      <Caret className={dim ? 'fill-[#999]' : 'fill-black'} />
    </span>
  );
}

const LETTER = "font-['Liberation_Serif',serif]";

function ExcelToolbar() {
  return (
    <div className="flex h-[25px] shrink-0 items-center bg-linear-to-b from-[#f7f7f5] to-[#d9d6cd] pl-[5px]">
      <Dots />
      <Tool label="new"><path d="M3.500.5h6l4 4v11h-10z" fill="#fff" stroke="#5b76a8" /><path d="M9.500.5v4h4" fill="#c8d8f0" stroke="#5b76a8" /></Tool>
      <Tool label="open"><path d="M1 14V4h5l1 2h6v3" fill="#f3c75a" stroke="#a87b1c" /><path d="M1 14l3-6h11l-3 6z" fill="#ffe08a" stroke="#a87b1c" /><path d="M8 3c2-3 5-2 6 0m0-3v3h-3" stroke="#4a78b8" /></Tool>
      <Tool label="save"><path d="M1.500 1.500h13v13h-12l-1-1z" fill="#5a62c8" stroke="#343a8e" /><path d="M4 2h8v6H4z" fill="#fff" /><path d="M5 10h7v5H5z" fill="#d4d8f4" /><path d="M6 11h2v3H6z" fill="#343a8e" /></Tool>
      <Tool label="permission"><path d="M3.500.5h6l3 3v11h-9z" fill="#fff" stroke="#5b76a8" /><circle cx="11.500" cy="11" r="4" fill="#d8412a" /><path d="M9 11h5" stroke="#fff" strokeWidth="2" /></Tool>
      <Tool label="mail"><path d="M5 1h8l2 2v8H5z" fill="#fff" stroke="#5b76a8" /><path d="M1 8l5-3 5 3v7H1z" fill="#dfe8f5" stroke="#5b76a8" /><path d="M1 8l5 4 5-4" stroke="#5b76a8" /></Tool>
      <Sep />
      <Tool label="print"><path d="M5 1h8l-1 5H3z" fill="#fff" stroke="#667" /><path d="M1 6h13v7H1z" fill="#c3ccd8" stroke="#556" /><path d="M2 10h8v2H2z" fill="#3fae3f" /><path d="M3 13h9v2H3z" fill="#eee" stroke="#667" /></Tool>
      <Tool label="preview"><path d="M1.500.5h8l3 3v12h-11z" fill="#fff" stroke="#5b76a8" /><circle cx="9" cy="8" r="3.500" fill="#cfe5f5" stroke="#555" /><path d="M11.500 11l3.500 4" stroke="#b06b2b" strokeWidth="2" /></Tool>
      <Sep />
      <Tool label="spelling"><text x="0" y="8" fontSize="8" fill="#000">字</text><text x="8" y="9" fontSize="9" fill="#000">A</text><path d="M4 11l3 4 7-7" stroke="#3a6fd0" strokeWidth="2.500" /></Tool>
      <Tool label="research"><path d="M1 2h3v12H1z" fill="#6f78c8" stroke="#444" /><path d="M5 3h3v11H5z" fill="#c25b90" stroke="#444" /><path d="M9 1h4v4H9z" fill="#e3a33d" stroke="#444" /><circle cx="10" cy="8" r="3.500" fill="#dcecf8" stroke="#555" /><path d="M12 11l3 4" stroke="#b06b2b" strokeWidth="2" /></Tool>
      <Sep />
      <Tool label="cut"><path d="M5 1l4 9M11 1L7 10" stroke="#4a5f8a" strokeWidth="1.500" /><circle cx="5" cy="12.500" r="2" stroke="#3056b0" strokeWidth="1.500" /><circle cx="11" cy="12.500" r="2" stroke="#3056b0" strokeWidth="1.500" /></Tool>
      <Tool label="copy"><path d="M1 2h6l2 2v7H1z" fill="#e8f0fb" stroke="#3d6ab5" /><path d="M6 6h6l3 3v6H6z" fill="#e8f0fb" stroke="#3d6ab5" /><path d="M8 10h5M8 12h5M3 5h4M3 7h3" stroke="#3d6ab5" /></Tool>
      <Tool label="paste"><path d="M1 2h11v11H1z" fill="#d9a042" stroke="#8a5d16" /><path d="M4 1h5v3H4z" fill="#ccc" stroke="#555" /><path d="M7 7h6l2 2v6H7z" fill="#fff" stroke="#3d6ab5" /><path d="M9 11h4M9 13h4" stroke="#3d6ab5" /></Tool>
      <Drop />
      <Tool label="format painter"><path d="M10 4l3-4 2 1-2 5z" fill="#7a8fb8" stroke="#445" strokeWidth=".6" /><path d="M7 4l6 4-5 7-7-5z" fill="#f3d36c" stroke="#a07c1f" /></Tool>
      <Sep />
      <Tool label="undo"><path d="M3 7c3-6 10-4 9 1 0 3-2 4-4 6" stroke="#4a86d8" strokeWidth="2.500" /><path d="M1 2v7h7z" fill="#4a86d8" /></Tool>
      <Drop />
      <Tool label="redo"><path d="M12 7C9 1 2 3 3 8c0 3 2 4 4 6" stroke="#b5b5b0" strokeWidth="2.500" /><path d="M14 2v7H8z" fill="#b5b5b0" /></Tool>
      <Drop dim />
      <Sep />
      <Tool label="hyperlink"><circle cx="7" cy="6" r="5.500" fill="#4f9fd8" stroke="#2b6aa0" /><path d="M3 3c3-2 6 0 4 2s-1 4-3 3zM9 6c2-1 3 0 3 1l-2 3z" fill="#5cb85c" /><path d="M6 12h4m1 0h4" stroke="#6a87a8" strokeWidth="3" strokeLinecap="round" /></Tool>
      <Tool label="sum"><path d="M12 4V2H4l5 6-5 6h8v-2" stroke="#888" strokeWidth="1.500" /></Tool>
      <Drop dim />
      <Tool label="sort ascending"><g className={LETTER} fill="#999" fontSize="9" fontWeight="bold"><text x="0" y="7">A</text><text x="1" y="15">Z</text></g><path d="M12 1v13m-2-3l2 3 2-3" stroke="#999" strokeWidth="1.200" /></Tool>
      <Tool label="sort descending"><g className={LETTER} fill="#999" fontSize="9" fontWeight="bold"><text x="1" y="7">Z</text><text x="0" y="15">A</text></g><path d="M12 1v13m-2-3l2 3 2-3" stroke="#999" strokeWidth="1.200" /></Tool>
      <Sep />
      <Tool label="chart"><path d="M1 1v14h14" stroke="#345" /><path d="M2 5h3v10H2z" fill="#3b7bd8" stroke="#234" /><path d="M6 2h4v13H6z" fill="#f0b13a" stroke="#543" /><path d="M11 4h4v11h-4z" fill="#d8412a" stroke="#422" /></Tool>
      <Tool label="drawing"><path d="M7 3l3-2h5v5l-3 3H7z" fill="#e9c46a" stroke="#7b6325" /><path d="M8 9h7v4l-3 2H8z" fill="#7da6cf" stroke="#3c5d80" /><path d="M1 13L5 5l4 8M3 10h4" stroke="#5a54b8" strokeWidth="2" /></Tool>
      <select aria-label="zoom" className={`ml-px h-[17px] w-[57px] shrink-0 appearance-none bg-white pl-[3px] text-[11px] leading-[17px] ${MONO}`}>
        <option>100%</option>
      </select>
      <span className="flex h-[17px] w-[11px] shrink-0 items-center bg-white"><Caret /></span>
      <Tool label="help"><circle cx="8" cy="8" r="7.500" fill="#3a78d8" stroke="#1f4a94" /><circle cx="8" cy="7" r="5.500" fill="#6ea4f0" /><text x="4.500" y="12.500" fontSize="12" fontWeight="bold" fill="#fff">?</text></Tool>
      <span className="ml-[2px] flex h-[25px] w-3 shrink-0 items-end justify-center rounded-r bg-[#8a8a84] pb-1"><Caret className="fill-black" /></span>
      <span className="ml-[5px]" />
      <Dots />
      <select aria-label="font" disabled className="ml-[3px] h-[19px] w-[151px] shrink-0 appearance-none border border-[#808080] bg-[#d4d0c8]" />
      <span className="-ml-3 flex w-3 shrink-0"><Caret className="fill-[#888]" /></span>
      <select aria-label="font size" disabled className="ml-[3px] h-[19px] w-[46px] shrink-0 appearance-none border border-[#808080] bg-[#d4d0c8]" />
      <span className="-ml-3 flex w-3 shrink-0"><Caret className="fill-[#888]" /></span>
      <Sep />
      <button className={`w-[23px] shrink-0 text-sm font-bold text-[#808080] ${LETTER}`}>B</button>
      <button className={`w-[23px] shrink-0 text-sm font-bold italic text-[#808080] ${LETTER}`}>I</button>
      <button className={`w-[23px] shrink-0 text-sm font-bold text-[#808080] underline ${LETTER}`}>U</button>
      <Sep />
      <Tool label="align left"><path d="M1 3.500h14M1 6.500h9M1 9.500h14M1 12.500h9" stroke="#888" /></Tool>
    </div>
  );
}

const xlMenus = [
  ['文件', 'F'], ['编辑', 'E'], ['视图', 'V'], ['插入', 'I'], ['格式', 'O'],
  ['工具', 'T'], ['数据', 'D'], ['窗口', 'W'], ['帮助', 'H'],
];

const xlCols = ['w-[34px]', 'w-[58px]', 'w-[37px]', 'w-[89px]', 'w-[61px]', 'w-[81px]', 'w-[54px]', 'w-[49px]', 'w-[89px]', 'w-[139px]', 'w-[88px]', 'w-[72px]', 'w-[72px]', 'w-[72px]'];

const xlRows = [
  { n: 8, b: '1', t: '孔铜最小1mil，外层完成铜厚1OZ', h: 'h-8', hot: true },
  { n: 9, b: '2', t: '如间距不足，请适当少补偿或削贴片保证阻焊桥', h: 'h-8', hot: false },
  { n: 10, b: '3', t: '如无特殊要求钻孔公差+/-3mil', h: 'h-10', hot: false },
];

function Spreadsheet() {
  const head = 'border-b border-r border-[#808080] bg-[#d4d0c8] px-0 pb-0 pt-[2px] font-normal';
  const ink = 'border-b border-r border-black p-0';
  const faint = 'border-b border-r border-[#c0c0c0] p-0';
  return (
    <table className={`w-[995px] table-fixed border-separate border-spacing-0 text-base leading-[16px] text-black ${SERIF}`}>
      <colgroup>
        {xlCols.map((w, i) => (
          <col key={i} className={w} />
        ))}
      </colgroup>
      <thead>
        <tr className="h-5">
          {['', ...'ABCDEFGHIJKLM'].map((c) => (
            <th key={c} className={head}>{c}</th>
          ))}
        </tr>
      </thead>
      <tbody>
        <tr className="h-[44px]">
          <th className={`${head} align-bottom`}>7</th>
          <td colSpan={2} className={`${ink} text-center text-[17px] font-medium leading-[19px]`}>
            工艺流程
            <br />
            指示
          </td>
          <td colSpan={7} className={ink} />
          <td className={ink} />
          <td className={faint} />
          <td className={faint} />
          <td className={faint} />
        </tr>
        {xlRows.map((r) => (
          <tr key={r.n} className={r.h}>
            <th className={`${head} align-bottom`}>{r.n}</th>
            <td className="border-r border-black p-0" />
            <td className={`${ink} text-center font-['Noto_Sans_CJK_SC',sans-serif] font-medium`}>{r.b}</td>
            <td colSpan={7} className={`${ink} pl-[3px] text-sm font-bold ${MONO} ${r.hot ? 'bg-[#ffff00]' : ''}`}>{r.t}</td>
            <td className={ink} />
            <td className={faint} />
            <td className={faint} />
            <td className={faint} />
          </tr>
        ))}
      </tbody>
    </table>
  );
}

function ExcelWindow() {
  return (
    <section className="absolute bottom-1 left-[928px] right-0 flex h-[278px] flex-col border-l border-t border-[#f4f2ee] bg-[#d4d0c8] pl-[2px] pt-[2px]">
      <div className="flex h-[19px] shrink-0 items-center bg-linear-to-r from-[#0a246a] via-[#4667a4] to-[#86a9d8] pl-[2px]">
        <Ic w={16} h={16}>
          <path d="M.5.5h15v15H.5z" fill="#e9f5e6" stroke="#2d7a34" />
          <path d="M3 3l7 9M10 3l-7 9" stroke="#2a8a34" strokeWidth="2.500" />
          <path d="M11 4h4M11 8h4M11 12h4" stroke="#2d7a34" />
        </Ic>
        <h2 className={`whitespace-pre pl-px text-xs font-bold text-white ${MONO}`}>Microsoft Excel - 2V2HNDDGAO-预审指示.xls</h2>
      </div>
      <ExcelToolbar />
      <div className={`flex h-[25px] shrink-0 items-center bg-linear-to-r from-[#dcd9d2] to-[#f3f3f1] pl-[5px] text-xs text-black ${SERIF}`}>
        <Dots />
        <span className="ml-1 mr-2">
          <Ic w={17} h={16}>
            <path d="M6 2h10v13H6z" fill="#dfe8f5" stroke="#3d6ab5" />
            <path d="M9 6h6M9 9h6M9 12h6" stroke="#3d6ab5" />
            <path d="M1 1h10v10H1z" fill="#e9f5e6" stroke="#2d7a34" />
            <path d="M3 3l6 6m0-6L3 9" stroke="#2a8a34" strokeWidth="2" />
          </Ic>
        </span>
        {xlMenus.map(([name, key]) => (
          <button key={name} className="w-[58px] shrink-0 text-left">
            {name} (<u>{key}</u>)
          </button>
        ))}
        <button className={`whitespace-nowrap text-[11px] ${MONO}`}>Adobe PDF(<u>B</u>)</button>
      </div>
      <div className="flex h-6 shrink-0 items-center bg-linear-to-r from-[#dcd9d2] to-[#f3f3f1]">
        <div className="flex h-6 items-center rounded bg-linear-to-b from-[#f9f9f7] to-[#e6e3db] pl-[5px]">
          <Dots />
          <button aria-label="convert to PDF" className="flex w-6 justify-center"><PdfIcon /></button>
          <button aria-label="convert and comment" className="flex w-6 justify-center"><PdfIcon note /></button>
          <span className="flex h-6 w-3 items-end justify-center rounded-r bg-[#8a8a84] pb-1"><Caret /></span>
        </div>
      </div>
      <div className={`flex h-5 shrink-0 items-center bg-white text-[13px] text-black ${MONO}`}>
        <input aria-label="name box" defaultValue="对象 130" className="h-5 w-[107px] bg-white pt-[2px] text-center text-sm" />
        <span className="flex h-full w-20 items-center bg-[#e4e1da]">
          <span className="flex w-4 justify-center"><Caret /></span>
          <i className={`ml-auto pr-1 text-sm font-bold ${LETTER}`}>fx</i>
        </span>
        <input aria-label="formula" defaultValue={'=EMBED("Acrobat Document","")'} className="h-full min-w-0 flex-1 bg-white pl-[10px] pt-[2px]" />
      </div>
      <div className="min-h-0 flex-1 overflow-hidden border-l-2 border-t-2 border-[#606060] bg-white">
        <Spreadsheet />
      </div>
    </section>
  );
}

/* ---------- page ---------- */

export default function App() {
  return (
    <div className="relative flex h-screen w-full flex-col overflow-hidden bg-[#d4d0c8]">
      <AcrobatHeader />
      <div className="flex min-h-0 flex-1">
        <SideRail />
        <div className="flex min-w-0 flex-1 flex-col">
          <div className="flex min-h-0 flex-1">
            <div className="w-1 shrink-0 bg-[#2a2a2a]" />
            <CadSheet />
            <div className="flex w-4 shrink-0 flex-col bg-[#eae8e4]">
              <button aria-label="scroll up" className="flex h-4 items-center justify-center border border-b-[#404040] border-l-white border-r-[#404040] border-t-white bg-[#d4d0c8]">
                <svg width="7" height="4" viewBox="0 0 7 4" aria-hidden="true"><path d="M0 4h7L3.500 0z" /></svg>
              </button>
              <div className="mt-[290px] h-[292px] border border-b-[#404040] border-l-white border-r-[#404040] border-t-white bg-[#d4d0c8]" />
            </div>
          </div>
          <footer className={`flex h-4 shrink-0 items-stretch bg-[#d4d0c8] text-xs leading-4 text-black ${SANS}`}>
            <span className="w-[145px] whitespace-pre bg-[#e2e2e2] pl-5">43.175 x 27.937 厘米</span>
            <button aria-label="scroll left" className="flex w-[14px] items-center justify-center border border-b-[#404040] border-l-white border-r-[#404040] border-t-white">
              <svg width="4" height="7" viewBox="0 0 4 7" aria-hidden="true"><path d="M4 0v7L0 3.500z" /></svg>
            </button>
            <div className="ml-[2px] flex-1 border border-b-[#404040] border-l-white border-r-[#404040] border-t-white" />
          </footer>
        </div>
      </div>
      <div className="h-1 shrink-0 overflow-hidden border-t border-[#f4f2ee] bg-[#d4d0c8] pl-16">
        <svg width="30" height="4" viewBox="0 0 30 4" aria-hidden="true">
          <circle cx="9" cy="8" r="8" fill="#7cc51f" />
          <circle cx="21" cy="8" r="8" fill="#54a8f0" />
        </svg>
      </div>
      <DrillToolManager />
      <ExcelWindow />
    </div>
  );
}
